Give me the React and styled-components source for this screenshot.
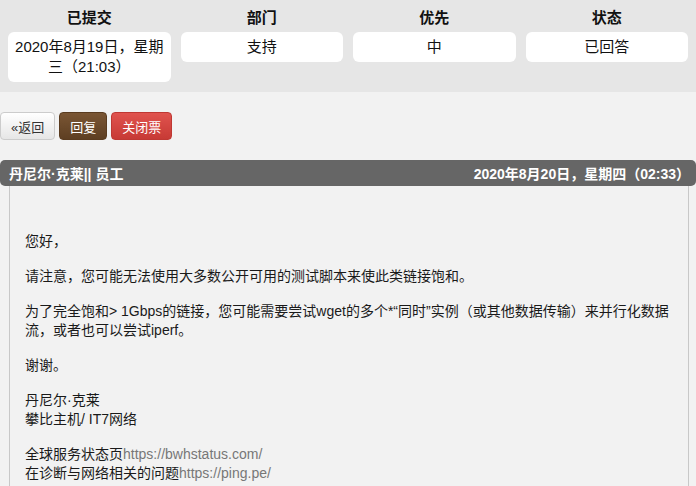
import React from "react";
import styled, { createGlobalStyle } from "styled-components";

const GlobalStyle = createGlobalStyle`
  body {
    margin: 0;
    background-color: #f2f2f2;
    font-family: "Liberation Sans", "Noto Sans CJK SC", sans-serif;
    color: #222;
  }
`;

const InfoPanel = styled.div`
  display: grid;
  grid-template-columns: repeat(4, 1fr);
  gap: 10px;
  padding: 8px 8px 10px;
  background-color: #e6e6e6;
`;

const InfoCol = styled.div`
  display: flex;
  flex-direction: column;
`;

const InfoLabel = styled.div`
  font-size: 15px;
  font-weight: bold;
  line-height: 20px;
  text-align: center;
  margin-bottom: 4px;
  color: #111;
`;

const InfoValue = styled.div`
  background-color: #fff;
  border-radius: 6px;
  padding: 5px 4px;
  font-size: 15px;
  line-height: 20px;
  text-align: center;
  color: #111;
`;

const ButtonRow = styled.div`
  display: flex;
  gap: 4px;
  margin-top: 20px;
`;

const variants = {
  plain: "background: linear-gradient(#ffffff, #e6e6e6); color: #333; border-color: #ccc;",
  brown: "background: linear-gradient(#7a5634, #5e3f22); color: #fff; border-color: #5a3c20;",
  red: "background: linear-gradient(#e0534e, #c73a35); color: #fff; border-color: #bf3833;",
};

const Button = styled.button`
  height: 28px;
  padding: 0 10px;
  font-family: inherit;
  font-size: 13px;
  border: 1px solid;
  border-radius: 4px;
  cursor: pointer;
  ${(p) => variants[p.$variant]}
`;

const ThreadHeader = styled.div`
  display: flex;
  justify-content: space-between;
  align-items: center;
  height: 26px;
  margin-top: 20px;
  padding: 0 6px 0 9px;
  background-color: #666;
  border-radius: 5px;
  color: #fff;
  font-size: 14px;
  font-weight: bold;
`;

const MessageBody = styled.div`
  margin: 0 7px 0 9px;
  padding: 46px 15px 10px;
  border-left: 1px solid #c8c8c8;
  border-right: 1px solid #c8c8c8;
  font-size: 14px;
  line-height: 19px;
  color: #1a1a1a;
`;

const Para = styled.p`
  margin: 0 0 16px;
`;

const Link = styled.a`
  color: #777;
  text-decoration: none;
`;

const info = [
  ["已提交", "2020年8月19日，星期三（21:03）"],
  ["部门", "支持"],
  ["优先", "中"],
  ["状态", "已回答"],
];

export default function App() {
  return (
    <>
      <GlobalStyle />
      <InfoPanel>
        {info.map(([label, value]) => (
          <InfoCol key={label}>
            <InfoLabel>{label}</InfoLabel>
            <InfoValue>{value}</InfoValue>
          </InfoCol>
        ))}
      </InfoPanel>
      <ButtonRow>
        <Button $variant="plain">«返回</Button>
        <Button $variant="brown">回复</Button>
        <Button $variant="red">关闭票</Button>
      </ButtonRow>
      <ThreadHeader>
        <span>丹尼尔·克莱|| 员工</span>
        <span>2020年8月20日，星期四（02:33）</span>
      </ThreadHeader>
      <MessageBody>
        <Para>您好，</Para>
        <Para>请注意，您可能无法使用大多数公开可用的测试脚本来使此类链接饱和。</Para>
        <Para>
          为了完全饱和&gt; 1Gbps的链接，您可能需要尝试wget的多个*“同时”实例（或其他数据传输）来并行化数据流，或者也可以尝试iperf。
        </Para>
        <Para>谢谢。</Para>
        <Para>
          丹尼尔·克莱
          <br />
          攀比主机/ IT7网络
        </Para>
        <Para>
          全球服务状态页<Link href="#">https://bwhstatus.com/</Link>
          <br />
          在诊断与网络相关的问题<Link href="#">https://ping.pe/</Link>
        </Para>
      </MessageBody>
    </>
  );
}
